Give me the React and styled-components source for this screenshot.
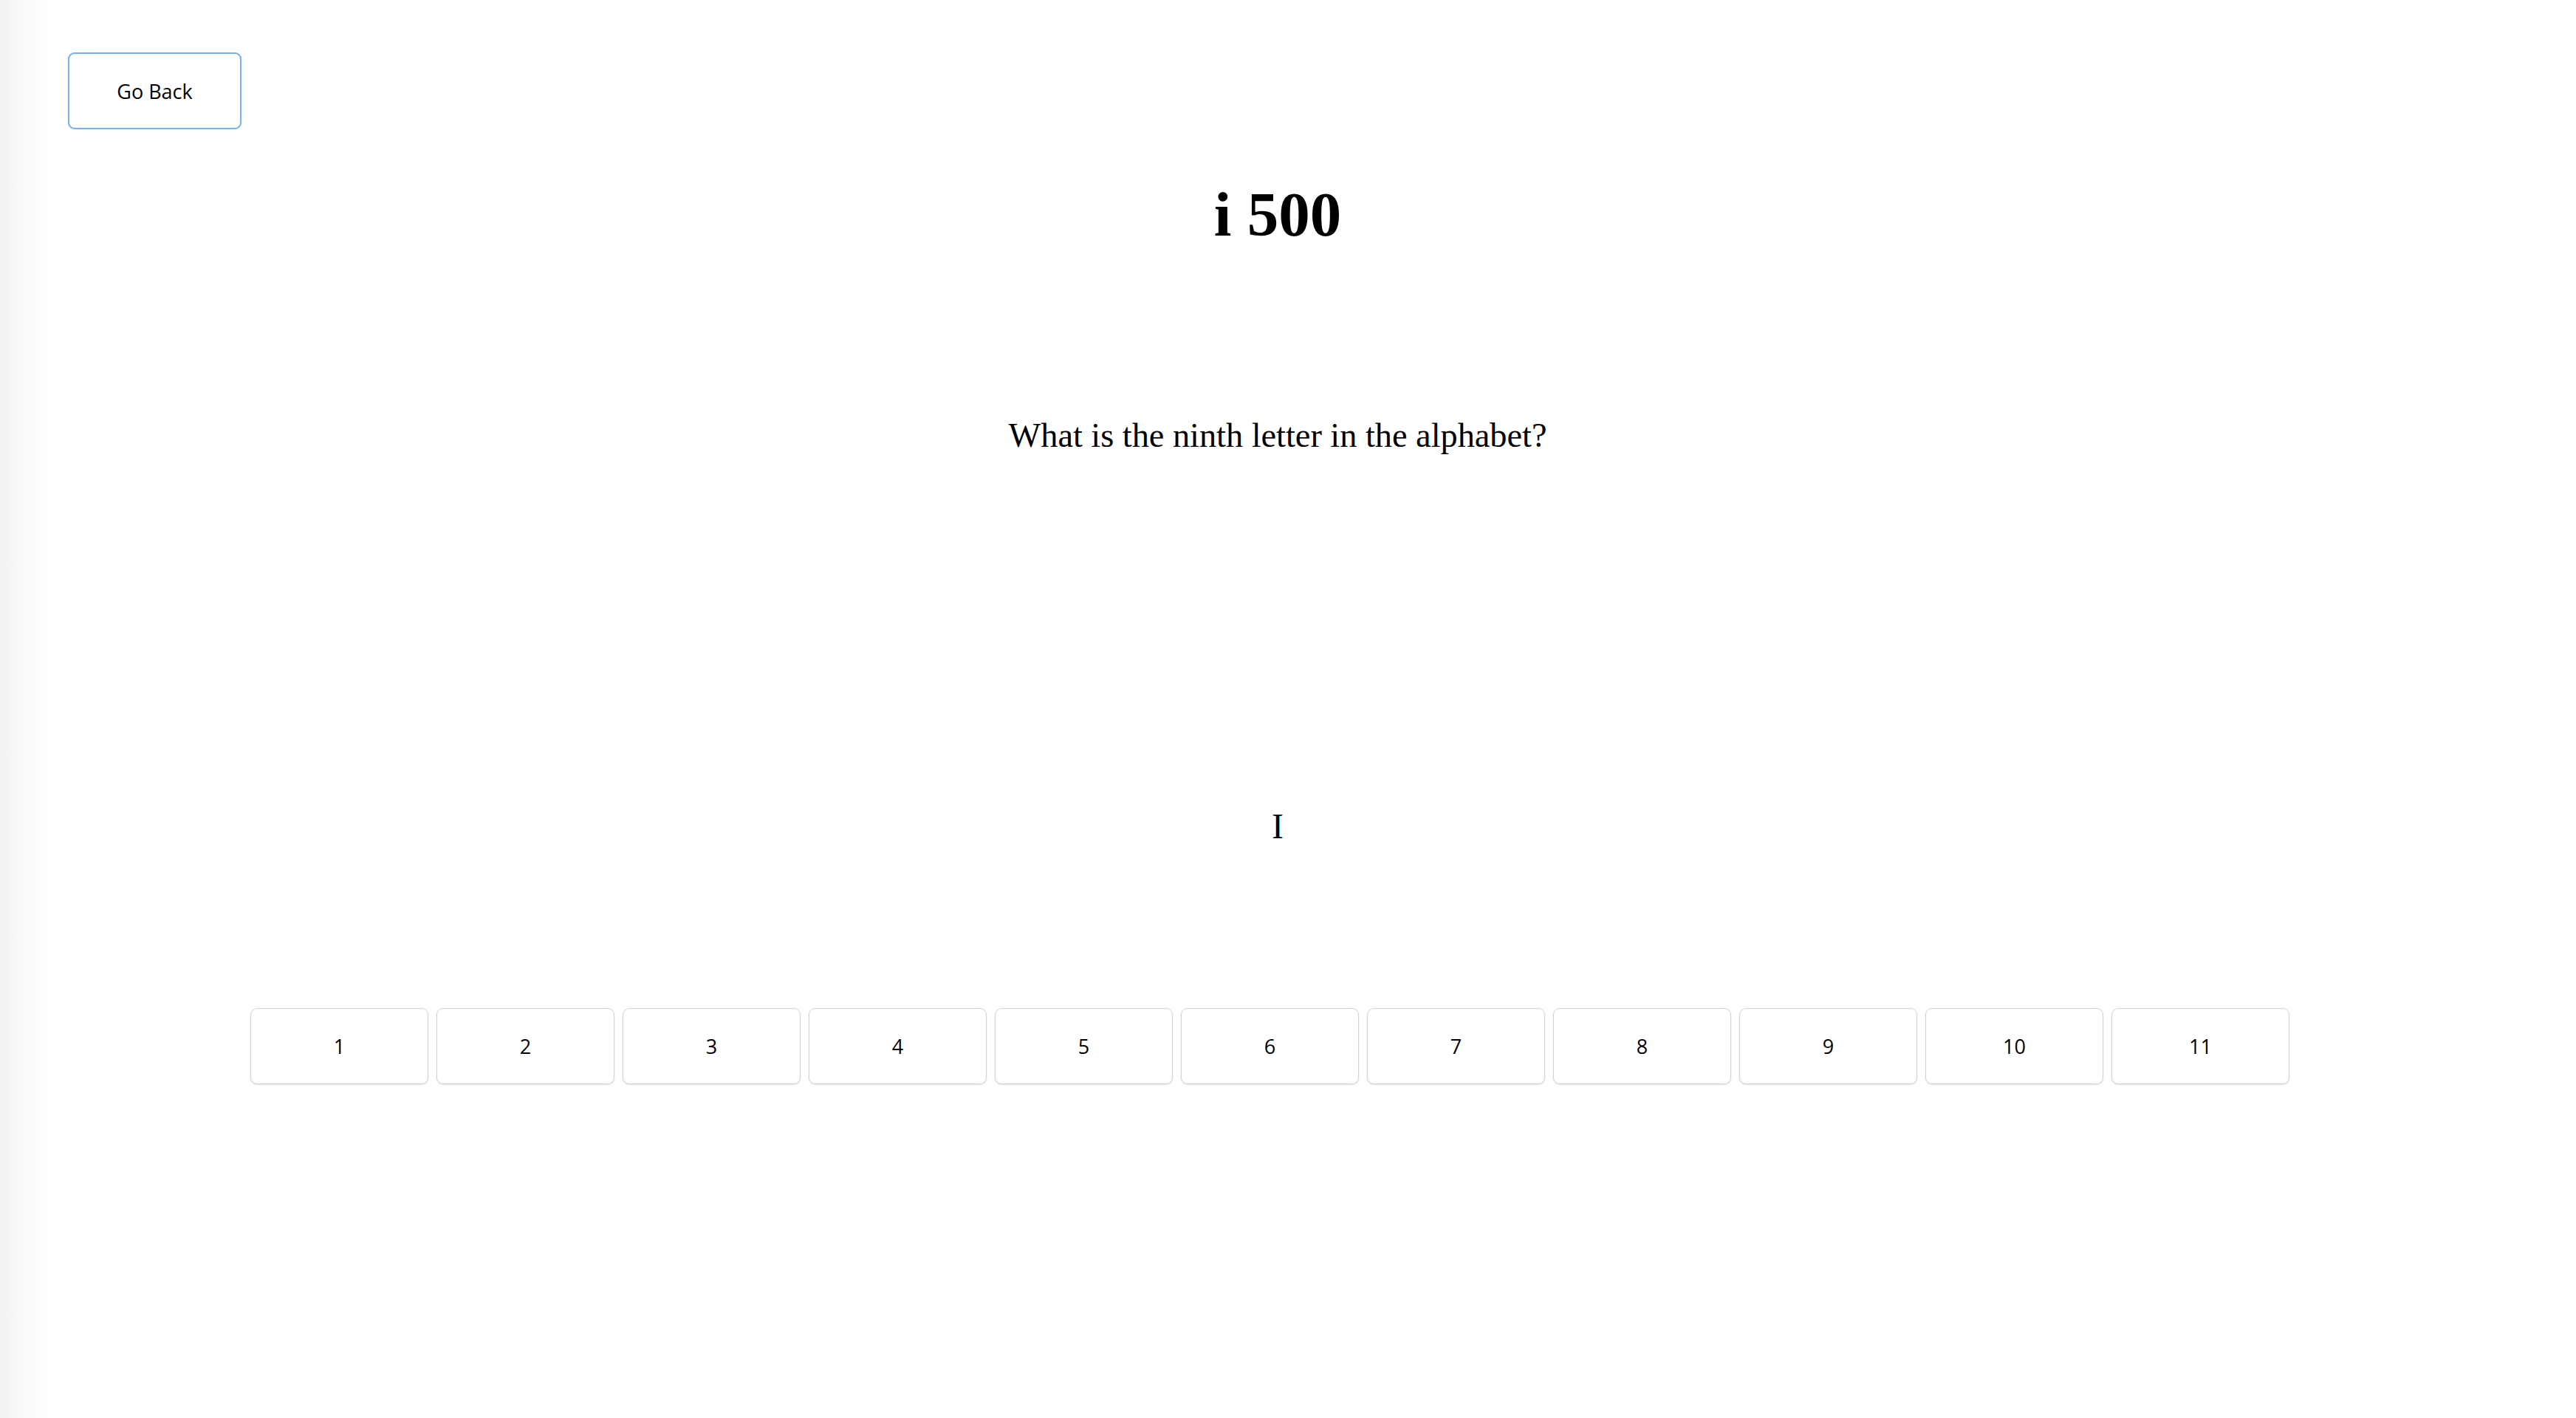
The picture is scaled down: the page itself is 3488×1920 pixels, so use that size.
import React from 'react'
import styled, { createGlobalStyle } from 'styled-components'

const GlobalStyle = createGlobalStyle`
  html, body {
    margin: 0;
    padding: 0;
  }
  body {
    background: linear-gradient(to right, #f2f2f2 0px, #fafafa 30px, #ffffff 70px);
    font-family: "Liberation Serif", "Times New Roman", serif;
    color: #000;
  }
`

const Page = styled.div`
  min-height: 1920px;
  box-sizing: border-box;
  display: flex;
  flex-direction: column;
  align-items: center;
  padding-right: 28px;
`

const TopBar = styled.div`
  align-self: stretch;
  padding: 71px 0 0 92px;
`

const BackButton = styled.button`
  width: 235px;
  height: 104px;
  box-sizing: border-box;
  background: #fff;
  border: 2px solid #7cb1ec;
  border-radius: 9px;
  box-shadow: 0 0 1px rgba(90, 150, 230, 0.5);
  font-family: "Open Sans", "Noto Sans", sans-serif;
  font-size: 27px;
  color: #000;
  cursor: pointer;
`

const Title = styled.h1`
  margin: 66px 0 0;
  font-size: 85px;
  font-weight: bold;
  line-height: normal;
`

const Question = styled.p`
  margin: 224px 0 0;
  font-size: 46.3px;
  line-height: normal;
`

const Answer = styled.p`
  margin: 475px 0 0;
  font-size: 48px;
  line-height: normal;
`

const ChoiceRow = styled.div`
  margin: 219px 21px 0 0;
  display: flex;
  gap: 11px;
`

const Choice = styled.button`
  width: 241px;
  height: 103px;
  box-sizing: border-box;
  background: #fff;
  border: 1px solid #d4d4d4;
  border-radius: 9px;
  box-shadow: 0 1px 2px rgba(0, 0, 0, 0.12);
  font-family: "Open Sans", "Noto Sans", sans-serif;
  font-size: 27px;
  color: #000;
  cursor: pointer;
`

export default function App() {
  const choices = Array.from({ length: 11 }, (_, i) => i + 1)

  return (
    <>
      <GlobalStyle />
      <Page>
        <TopBar>
          <BackButton>Go Back</BackButton>
        </TopBar>
        <Title>i 500</Title>
        <Question>What is the ninth letter in the alphabet?</Question>
        <Answer>I</Answer>
        <ChoiceRow>
          { choices.map(n => (
            <Choice key={ n }>{ n }</Choice>
          )) }
        </ChoiceRow>
      </Page>
    </>
  )
}
